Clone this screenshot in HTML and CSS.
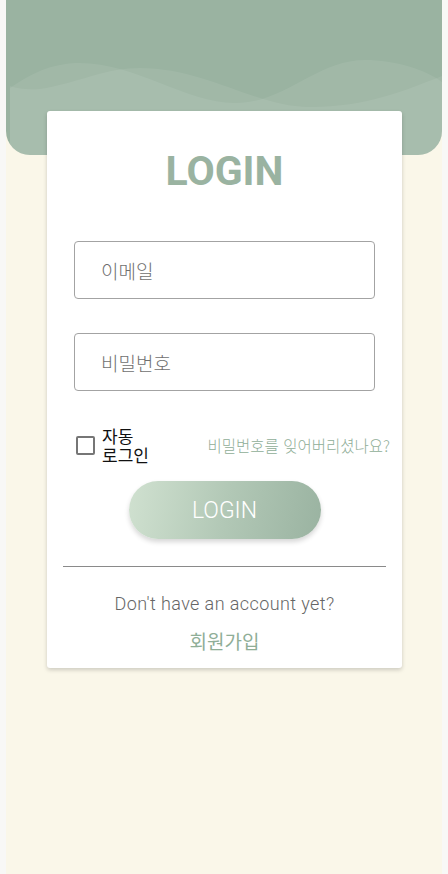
FILE: index.html
```html
<!DOCTYPE html>
<html lang="ko">
<head>
<meta charset="utf-8">
<title>Login</title>
<link rel="stylesheet" href="styles.css">
</head>
<body>
<div class="app">
  <header class="hero">
    <svg class="waves" viewBox="0 0 436 155" preserveAspectRatio="none" aria-hidden="true">
      <path d="M4,88 C30,70 50,63 74,63 C130,63 180,103 229,103 C280,103 310,60 359,60 C390,60 420,70 436,82 V155 H4 Z" fill="#ffffff" fill-opacity="0.07"/>
      <path d="M4,86 C15,90 30,90 40,88 C80,80 100,68 134,68 C200,68 250,107 304,107 C360,107 400,90 436,76 V155 H4 Z" fill="#ffffff" fill-opacity="0.07"/>
    </svg>
  </header>
  <main class="card">
    <h1 class="title">LOGIN</h1>
    <div class="field"><input class="input" type="email" placeholder="이메일"></div>
    <div class="field"><input class="input" type="password" placeholder="비밀번호"></div>
    <div class="options">
      <label class="remember"><span class="box"></span><span class="remember-text">자동 로그인</span></label>
      <a class="forgot" href="#">비밀번호를 잊어버리셨나요?</a>
    </div>
    <div class="btn-wrap"><button class="btn" type="button">LOGIN</button></div>
    <hr class="divider">
    <p class="no-account">Don't have an account yet?</p>
    <a class="signup" href="#">회원가입</a>
  </main>
</div>
</body>
</html>
```
FILE: styles.css
```css
html, body {
  margin: 0;
  padding: 0;
}
body {
  background: #f8f8f6;
  font-family: Roboto, "Noto Sans CJK KR", sans-serif;
}
.app {
  width: 436px;
  min-height: 874px;
  margin: 0 auto;
  background: #faf7e9;
}
.hero {
  position: relative;
  height: 155px;
  background: #9ab3a1;
  border-radius: 0 0 24px 24px;
  overflow: hidden;
}
.waves {
  position: absolute;
  left: 0;
  top: 0;
  width: 100%;
  height: 100%;
}
.card {
  position: relative;
  z-index: 1;
  width: 355px;
  margin: -44px 0 0 41px;
  box-sizing: border-box;
  padding: 36px 16px 14px;
  background: #fff;
  border-radius: 3px;
  box-shadow: 0 2px 4px rgba(0, 0, 0, 0.18);
  display: flex;
  flex-direction: column;
  align-items: stretch;
}
.title {
  margin: 0;
  text-align: center;
  font-family: Roboto, sans-serif;
  font-weight: 700;
  font-size: 41px;
  line-height: 48px;
  color: #9ab3a1;
}
.field {
  padding: 0 11px;
}
.field:first-of-type {
  margin-top: 46px;
}
.field + .field {
  margin-top: 34px;
}
.input {
  display: block;
  width: 100%;
  height: 58px;
  box-sizing: border-box;
  border: 1px solid #a3a3a3;
  border-radius: 4px;
  padding: 0 26px;
  font-family: "Noto Sans CJK KR", sans-serif;
  font-weight: 300;
  font-size: 19px;
  color: #333;
  background: #fff;
  outline: none;
}
.input::placeholder {
  color: #6f6f6f;
}
.options {
  display: flex;
  align-items: center;
  justify-content: space-between;
  margin: 35px -4px 0 13px;
}
.remember {
  display: flex;
  align-items: center;
  gap: 7px;
}
.box {
  width: 15px;
  height: 15px;
  border: 2px solid #767676;
  border-radius: 2px;
}
.remember-text {
  width: 52px;
  word-break: keep-all;
  font-family: "Noto Sans CJK KR", sans-serif;
  font-size: 17px;
  line-height: 19px;
  color: #111;
}
.forgot {
  font-family: "Noto Sans CJK KR", sans-serif;
  font-weight: 300;
  font-size: 15.5px;
  color: #8fae97;
  text-decoration: none;
}
.btn-wrap {
  display: flex;
  justify-content: center;
  margin-top: 17px;
}
.btn {
  width: 192px;
  height: 58px;
  border: none;
  border-radius: 29px;
  background: linear-gradient(100deg, #d0e1d0 0%, #b2c8b6 50%, #9ab3a1 100%);
  box-shadow: 0 3px 5px rgba(0, 0, 0, 0.16);
  color: #fff;
  font-family: Roboto, sans-serif;
  font-weight: 300;
  font-size: 23px;
}
.divider {
  margin: 27px 0 0;
  border: none;
  border-top: 1px solid #8a8a8a;
  height: 0;
}
.no-account {
  margin: 25px 0 0;
  text-align: center;
  font-family: Roboto, sans-serif;
  font-weight: 300;
  font-size: 18px;
  letter-spacing: 0.4px;
  line-height: 24px;
  color: #666;
}
.signup {
  margin-top: 12px;
  text-align: center;
  font-family: "Noto Sans CJK KR", sans-serif;
  font-size: 19px;
  line-height: 26px;
  color: #8fae97;
  text-decoration: none;
}
```
